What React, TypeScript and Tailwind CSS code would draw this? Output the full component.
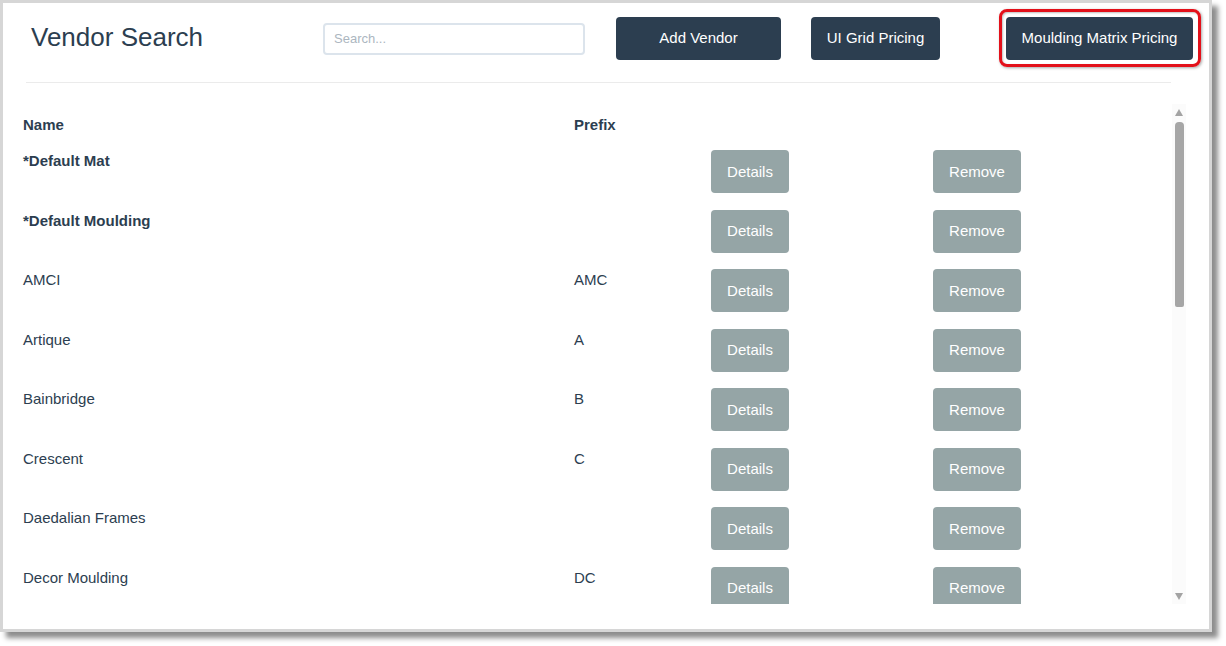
import React from "react";

type Vendor = {
  name: string;
  prefix: string;
  isDefault?: boolean;
};

const vendors: Vendor[] = [
  { name: "*Default Mat", prefix: "", isDefault: true },
  { name: "*Default Moulding", prefix: "", isDefault: true },
  { name: "AMCI", prefix: "AMC" },
  { name: "Artique", prefix: "A" },
  { name: "Bainbridge", prefix: "B" },
  { name: "Crescent", prefix: "C" },
  { name: "Daedalian Frames", prefix: "" },
  { name: "Decor Moulding", prefix: "DC" },
];

const font = { fontFamily: '"Liberation Sans", Arial, sans-serif' };

function GreyButton({ label, width }: { label: string; width: string }) {
  return (
    <button
      className={`h-[43px] ${width} shrink-0 rounded-[4px] bg-[#95a5a6] text-[15px] leading-5 text-white`}
    >
      {label}
    </button>
  );
}

function Scrollbar() {
  return (
    <div className="flex w-[14px] shrink-0 flex-col items-center bg-[#fbfbfb] pt-[5px] pb-[4px]">
      <svg width="8" height="7" viewBox="0 0 8 7" className="shrink-0">
        <path d="M4 0 L8 7 L0 7 Z" fill="#a3a3a3" />
      </svg>
      <div className="mt-[6px] h-[185px] w-[9px] shrink-0 rounded-t-[4px] rounded-b-[2px] bg-[#a6a6a6]" />
      <div className="flex-1" />
      <svg width="8" height="7" viewBox="0 0 8 7" className="shrink-0">
        <path d="M0 0 L8 0 L4 7 Z" fill="#a3a3a3" />
      </svg>
    </div>
  );
}

export default function App() {
  return (
    <div className="h-[646px] w-[1226px] overflow-hidden bg-white" style={font}>
      <div className="h-[632px] w-[1212px] border-[3px] border-[#d6d6d6] bg-white shadow-[6px_6px_5px_rgba(0,0,0,0.45)]">
        {/* header */}
        <div className="flex items-center pl-[28px] pt-[14px]">
          <h3 className="-mt-[4px] w-[292px] shrink-0 text-[26px] leading-[30px] text-[#2c3e50]">Vendor Search</h3>
          <input
            placeholder="Search..."
            className="h-[32px] w-[262px] shrink-0 rounded-[4px] border-2 border-[#dce4ec] px-[9px] text-[13px] text-[#2c3e50] placeholder:text-[#acb6c0] outline-none"
          />
          <button className="ml-[31px] h-[43px] w-[165px] shrink-0 rounded-[4px] bg-[#2c3e50] text-[15px] text-white">
            Add Vendor
          </button>
          <button className="ml-[30px] h-[43px] w-[129px] shrink-0 rounded-[4px] bg-[#2c3e50] text-[15px] text-white">
            UI Grid Pricing
          </button>
          <div className="relative ml-[66px] shrink-0">
            <button className="h-[43px] w-[187px] rounded-[4px] bg-[#2c3e50] text-[15px] text-white">
              Moulding Matrix Pricing
            </button>
            <div className="pointer-events-none absolute -top-[8px] -bottom-[7px] -left-[7px] -right-[8px] rounded-[8px] border-[3px] border-[#e3101a] shadow-[1px_1px_3px_rgba(0,0,0,0.35),inset_1px_1px_2px_rgba(0,0,0,0.25)]" />
          </div>
        </div>

        <div className="ml-[23px] mr-[38px] mt-[22px] h-px bg-[#ebebeb]" />

        {/* table */}
        <div className="ml-[12px] mr-[23px] mt-[21px] flex h-[500px] overflow-hidden">
          <div className="flex-1 overflow-hidden pt-[2px] text-[15px] leading-[21px] text-[#2c3e50]">
            <div className="flex h-[36px] items-center font-bold">
              <div className="w-[551px] shrink-0 px-2">Name</div>
              <div className="w-[137px] shrink-0 px-2">Prefix</div>
            </div>
            {vendors.map((v) => (
              <div key={v.name} className="flex h-[59.5px] shrink-0 items-start pt-2">
                <div className={`w-[551px] shrink-0 px-2 ${v.isDefault ? "font-bold" : ""}`}>{v.name}</div>
                <div className="w-[137px] shrink-0 px-2">{v.prefix}</div>
                <div className="w-[222px] shrink-0 px-2">
                  <GreyButton label="Details" width="w-[78px]" />
                </div>
                <div className="shrink-0 px-2">
                  <GreyButton label="Remove" width="w-[88px]" />
                </div>
              </div>
            ))}
          </div>
          <Scrollbar />
        </div>
      </div>
    </div>
  );
}
